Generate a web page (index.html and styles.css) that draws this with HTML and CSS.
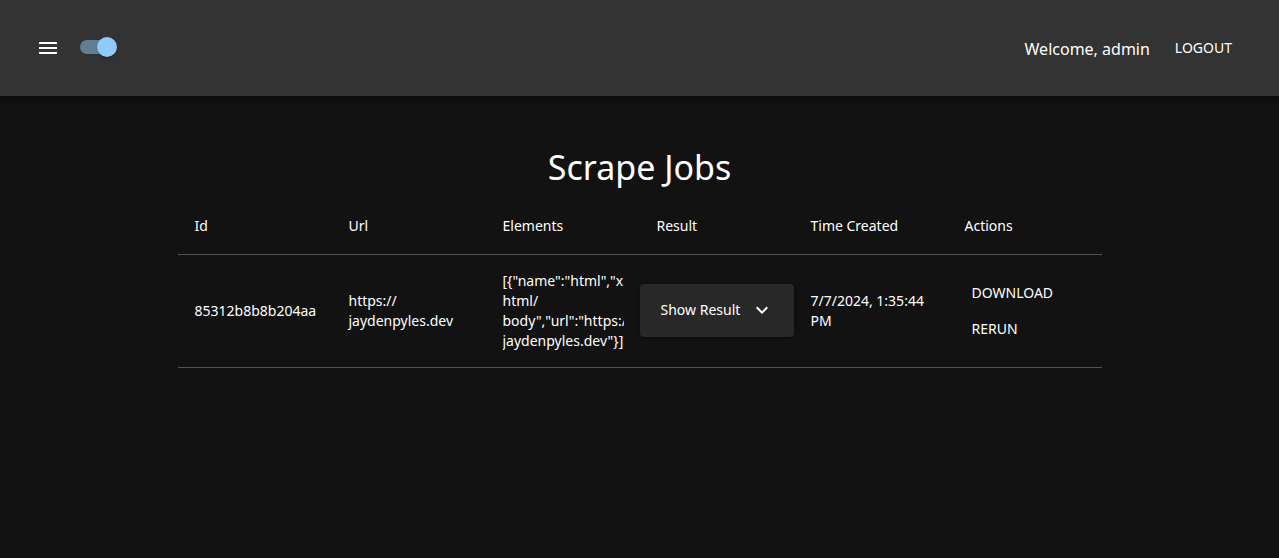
FILE: index.html
```html
<!DOCTYPE html>
<html lang="en">
<head>
<meta charset="utf-8">
<title>Scrape Jobs</title>
<link rel="stylesheet" href="styles.css">
</head>
<body>
<header class="appbar">
  <div class="appbar-left">
    <button class="icon-btn" aria-label="menu">
      <svg viewBox="0 0 24 24" width="24" height="24"><path fill="#fff" d="M3 18h18v-2H3v2zm0-5h18v-2H3v2zm0-7v2h18V6H3z"/></svg>
    </button>
    <span class="switch">
      <span class="switch-track"></span>
      <span class="switch-thumb"></span>
    </span>
  </div>
  <div class="appbar-right">
    <span class="welcome">Welcome, admin</span>
    <button class="text-btn">Logout</button>
  </div>
</header>
<main class="content">
  <h1 class="title">Scrape Jobs</h1>
  <table class="jobs">
    <thead>
      <tr>
        <th>Id</th>
        <th>Url</th>
        <th>Elements</th>
        <th>Result</th>
        <th>Time Created</th>
        <th>Actions</th>
      </tr>
    </thead>
    <tbody>
      <tr>
        <td>85312b8b8b204aa</td>
        <td>https://<wbr>jaydenpyles.dev</td>
        <td><div class="clip">[{"name":"html","xpath":"/<wbr>html/<wbr>body","url":"https://<wbr>jaydenpyles.dev"}]</div></td>
        <td class="result-cell">
          <div class="accordion">
            <span>Show Result</span>
            <svg viewBox="0 0 24 24" width="24" height="24"><path fill="#fff" d="M16.59 8.59 12 13.17 7.41 8.59 6 10l6 6 6-6z"/></svg>
          </div>
        </td>
        <td>7/7/2024, 1:35:44 PM</td>
        <td>
          <div class="actions">
            <button class="text-btn">Download</button>
            <button class="text-btn">Rerun</button>
          </div>
        </td>
      </tr>
    </tbody>
  </table>
</main>
</body>
</html>
```
FILE: styles.css
```css
* { box-sizing: border-box; }
html, body { margin: 0; padding: 0; }
body {
  background: #121212;
  color: #fff;
  font-family: "Noto Sans", "Open Sans", sans-serif;
  height: 558px;
  overflow: hidden;
}
button { font-family: inherit; }

.appbar {
  height: 96px;
  background: #333333;
  display: flex;
  align-items: center;
  justify-content: space-between;
  padding: 0 39px 0 28px;
  box-shadow: 0 2px 4px -1px rgba(0,0,0,.2), 0 4px 5px 0 rgba(0,0,0,.14), 0 1px 10px 0 rgba(0,0,0,.12);
}
.appbar-left { display: flex; align-items: center; }
.icon-btn {
  width: 40px; height: 40px;
  padding: 8px;
  border: 0; background: none;
  display: flex; align-items: center; justify-content: center;
}
.icon-btn svg { display: block; }

.switch {
  position: relative;
  width: 58px; height: 38px;
  padding: 12px;
  display: inline-block;
  margin-top: -2px;
}
.switch-track {
  display: block;
  width: 34px; height: 14px;
  border-radius: 7px;
  background: #90caf9;
  opacity: .5;
}
.switch-thumb {
  position: absolute;
  left: 29px; top: 9px;
  width: 20px; height: 20px;
  border-radius: 50%;
  background: #90caf9;
  box-shadow: 0 2px 1px -1px rgba(0,0,0,.2), 0 1px 1px 0 rgba(0,0,0,.14), 0 1px 3px 0 rgba(0,0,0,.12);
}

.appbar-right { display: flex; align-items: center; gap: 17px; }
.welcome { font-size: 16px; line-height: 24px; margin-top: 1px; }
.text-btn {
  background: none; border: 0;
  color: #fff;
  font-size: 14px;
  font-weight: 400;
  text-transform: uppercase;
  line-height: 24px;
  padding: 6px 8px;
  text-align: left;
}

.title {
  margin: 50px 0 10px;
  text-align: center;
  font-size: 34px;
  font-weight: 400;
  line-height: 42px;
}

.jobs {
  width: 924px;
  margin: 0 auto;
  border-collapse: collapse;
  table-layout: fixed;
}
.jobs th, .jobs td {
  width: 154px;
  padding: 16px 16px 16px 17px;
  text-align: left;
  border-bottom: 1px solid #515151;
  font-size: 14px;
  vertical-align: middle;
}
.jobs th { font-weight: 400; line-height: 24px; }
.jobs td { font-weight: 400; line-height: 20px; }
.clip { overflow: hidden; }
.jobs td.result-cell { padding: 0; }
.accordion {
  height: 53px;
  margin-bottom: 2px;
  background: #282828;
  border-radius: 4px;
  display: flex;
  align-items: center;
  justify-content: space-between;
  padding: 0 20px 0 21px;
  box-shadow: 0 2px 1px -1px rgba(0,0,0,.2), 0 1px 1px 0 rgba(0,0,0,.14), 0 1px 3px 0 rgba(0,0,0,.12);
  line-height: 20px;
}
.accordion svg { display: block; }
.actions { display: flex; flex-direction: column; align-items: flex-start; margin-left: -1px; }
.actions .text-btn { height: 36px; }
```
